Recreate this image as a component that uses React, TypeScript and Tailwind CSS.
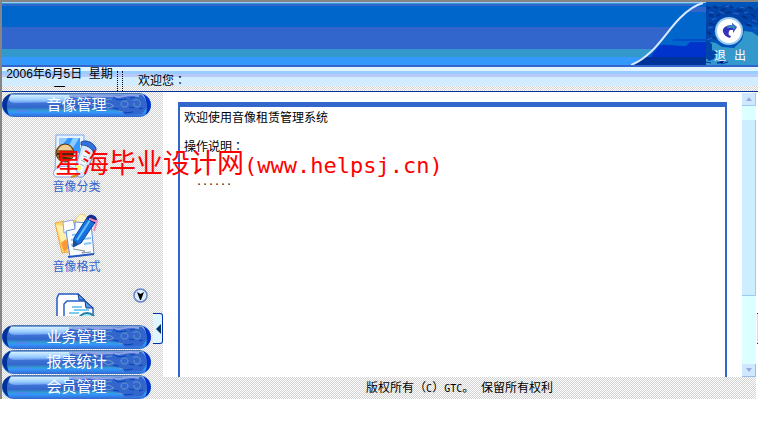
import React from 'react';
import clsx from 'clsx';

const DITHER = 'bg-[conic-gradient(#d2d2d2_25%,#ffffff_0_50%,#d2d2d2_0_75%,#ffffff_0)] bg-[length:2px_2px]';

interface MenuItem {
  label: string;
  icon: React.ReactNode;
}

const CategoryIcon = () => (
  <svg width="46" height="46" viewBox="0 0 46 46" aria-hidden="true">
    <path d="M3 2h28v15l-5 26H2z" fill="#e8f3ff" stroke="#7aa8e8" />
    <path d="M6 5h21v15H6z" fill="#3399ff" />
    <path d="M6 5h9L6 16zM20 5h6l-9 15h-5z" fill="#8fcbff" />
    <path d="M30 8c6-1 14 4 13 9L31 43c-3 3-11 0-10-4z" fill="#d4e9ff" stroke="#6699dd" />
    <path d="M28 9c6-3 15 2 15 8l-2 3C38 14 33 12 28 12z" fill="#3370d8" stroke="#234fae" />
    <path d="M31 17l6 2-8 20-6-2z" fill="#f7fbff" />
    <path d="M30 23l4 1M28 27l4 2M27 31l4 2" stroke="#93acd0" />
    <circle cx="25" cy="35" r="3" fill="#fff27a" />
    <path d="M1 38c5-6 17-7 23 0v6H4c-3 0-4-3-3-6z" fill="#fff" stroke="#8d9ee0" />
    <circle cx="12" cy="20" r="9" fill="#a06a2c" stroke="#593512" />
    <path d="M5 17c3-7 12-7 14 0z" fill="#f0cd94" />
    <path d="M4 21h16M6 24l12 2" stroke="#4b2809" strokeWidth="2" />
    <path d="M18 44l7-2" stroke="#d58a25" strokeWidth="2" />
  </svg>
);

const FormatIcon = () => (
  <svg width="46" height="46" viewBox="0 0 46 46" aria-hidden="true">
    <path d="M2 10l9-2 3 3 9-4 6 30-20 3z" fill="#ffd86b" stroke="#f0a83c" />
    <path d="M3 12l8 25 6-4-5-20z" fill="#ffefad" />
    <path d="M8 30l3 9 5-4-3-9z" fill="#ff9838" />
    <path d="M10 9l10-2 3 11-12 2z" fill="#fff" stroke="#93a7de" />
    <path d="M23 6l4-5 5 1 3 5v8H23z" fill="#fff5c7" stroke="#efcf87" />
    <path d="M13 18l9-2V9l16 1 3 31-24 3z" fill="#f9fcff" stroke="#5c8ee0" />
    <path d="M15 44l26-3" stroke="#2458c0" strokeWidth="2" />
    <path d="M19 22l9-1M18 27l8-1M18 32l5-1M31 31l7-1M30 26l8-1" stroke="#86c5f6" strokeWidth="2" />
    <path d="M20 36l12 2-3 2 9-1" stroke="#888e9c" fill="none" />
    <path d="M35 3l8 5-15 22-8 4 1-9z" fill="#1673dd" stroke="#143fa0" />
    <path d="M37 7L24 27" stroke="#65c1ff" strokeWidth="2" />
    <path d="M35 3c3-3 9 0 9 4l-2 4-8-5z" fill="#142c8f" />
    <path d="M36 6c3 0 6 3 8 2l-3 10" fill="none" stroke="#ef8bbb" strokeWidth="2" />
    <path d="M21 27l-1 7 5-3z" fill="#204d8f" />
  </svg>
);

const DocumentsIcon = () => (
  <svg width="46" height="46" viewBox="0 0 46 46" aria-hidden="true">
    <path d="M3 32V5l2-4h19l6 6v25z" fill="#fff" stroke="#245bc0" strokeWidth="1.5" />
    <path d="M10 42V11l3-3h18l8 7v27z" fill="#fff" stroke="#2962c8" strokeWidth="1.5" />
    <path d="M24 1l1 6h6zM31 8l1 7h7z" fill="#5e9aea" stroke="#123d9c" />
    <path d="M18 14h10M20 17h15M15 20h10" stroke="#7ecbef" strokeWidth="2" />
    <circle cx="33" cy="29" r="9" fill="#b6eaf6" stroke="#227ca8" strokeWidth="2" />
  </svg>
);

const menuItems: MenuItem[] = [
  { label: '音像分类', icon: <CategoryIcon /> },
  { label: '音像格式', icon: <FormatIcon /> },
  { label: '', icon: <DocumentsIcon /> },
];

const PillArt = () => (
  <svg className="absolute inset-0 h-full w-full" viewBox="0 0 149 25" preserveAspectRatio="none" aria-hidden="true">
    <defs>
      <linearGradient id="pill" x2="0" y2="1">
        <stop offset="0" stopColor="#3366aa" />
        <stop offset=".1" stopColor="#99bbee" />
        <stop offset=".35" stopColor="#4477d8" />
        <stop offset=".6" stopColor="#3366cc" />
        <stop offset=".72" stopColor="#3399cc" />
        <stop offset=".8" stopColor="#3399ff" />
        <stop offset="1" stopColor="#3366cc" />
      </linearGradient>
      <linearGradient id="shine" x2="0" y2="1">
        <stop offset="0" stopColor="#d5f0ff" />
        <stop offset=".6" stopColor="#99ccff" />
        <stop offset="1" stopColor="#6699ee" />
      </linearGradient>
    </defs>
    <rect y="1" width="149" height="24" rx="12" fill="url(#pill)" />
    <path d="M8 2C-2 6-2 18 7 23 4 17 4 8 9 3z" fill="#003399" />
    <path d="M141 2c10 4 10 17 2 21 3-5 3-14-2-21z" fill="#0033cc" />
    <path d="M9 3h58v7l-54 1C7 11 5 7 9 3z" fill="url(#shine)" />
    <path d="M62 8l7-3 10 1 9-2 52-1c6 6 5 14 0 19l-16 1-6-4-11-2-10 1-9-3-11 1-15-3z" fill="#3366cc" />
    <path d="M70 4l6 1 9-2 10 2 12-1 10 1 11-2 9 1" fill="none" stroke="#8ea2e6" strokeWidth="2" />
    <path d="M72 8l7-1M86 9l8-2 5 2M104 8l6-1M101 13l6-2 5 3-6 2zM119 12c0-4 7-4 7 0s-7 4-7 0M131 9c4-3 9 0 7 4s-7 1-6-2M116 19l5 1M89 13l5 1" fill="none" stroke="#6699cc" />
    <path d="M80 6l8 2M97 7l6 3M111 5l5 3 8-1M128 6l5-1M111 16l6 1M127 15l5 1M94 11l7 1M78 11l7-1M137 17l4-1M122 21l9-1" fill="none" stroke="#0044bb" />
    <path d="M14 19h14" stroke="#6677ff" />
  </svg>
);

const PillButton = ({ label }: { label: string }) => (
  <button type="button" className="relative block h-[25px] w-[149px] cursor-pointer text-center text-[15px] leading-[22px] text-white">
    <PillArt />
    <span className="relative">{label}</span>
  </button>
);

const Header = () => (
  <header className="relative flex h-[67px] justify-end border-t-2 border-[#858585] bg-[linear-gradient(#99ccff_0_1px,#3399cc_1px_2px,#3366cc_2px_4px,#0066cc_4px_25px,#3366cc_25px_47px,#3399cc_47px_55px,#3399ff_55px_63px,#3366cc_63px)]">
    <svg width="75" height="63" viewBox="0 0 75 63" aria-hidden="true">
      <path d="M0 63C23 54 34 31 49 16 57 8 64 3 72 1h3v62z" fill="#0066cc" />
      <path d="M56 10l5-5h14v5z" fill="#3366cc" />
      <path d="M43 38h32v25H12l17-20 14 1z" fill="#0033cc" />
      <path d="M35 44h20l4-4h16v-2H41z" fill="#0066cc" />
      <path d="M12 55h63v8H1z" fill="#003399" />
      <path d="M42 38h33M32 43l25 2M27 48h48" stroke="#0033cc" />
      <path d="M0 63C23 54 34 31 49 16 57 8 64 3 72 1" fill="none" stroke="#d7eaff" strokeWidth="2" />
    </svg>
    <button type="button" className="relative h-[63px] w-[52px] cursor-pointer text-[12px] text-white">
      <svg className="absolute inset-0" width="52" height="63" viewBox="0 0 52 63" aria-hidden="true">
        <rect width="52" height="63" fill="#0055bb" />
        <path d="M0 3l10 3 9-3 9 4 10-3 8 4 6-2v18l-9-4-7 3-7-6-8-2-10 5-4 16-7 6z" fill="#0044aa" />
        <path d="M1 6h3M7 4l5 2M15 8l5-1M24 4l3 2M31 8l6 1M42 5l5 2M3 13l4 1M11 14l3-2M36 14l5 2M45 12l4 3M3 21l5 2M39 22l7 2M1 30l4 2M7 35l3 2M20 11l5-1" stroke="#003388" strokeWidth="2" />
        <path d="M3 10l5 1M13 9l5 3M27 11l6 1M38 11l4-1M46 18l5 2M6 18l4-2M2 26l5-1M34 5l5 1M19 5l4-1M8 29l2 2M47 26l4 1M1 38l5-2" stroke="#3366cc" />
        <path d="M0 46l5-6 5 1 6 4 12 1 8-8 2-9 8 1 6 4v29H0z" fill="#3399cc" />
        <path d="M0 38l6 4v6l5 2-3 7-5 2-3-3z" fill="#0044aa" />
        <path d="M11 61l8-3-3 3zM15 62l7-2M0 60l5 1M1 50l4 3" stroke="#0033aa" />
        <circle cx="23" cy="29" r="14" fill="#99ccee" />
        <circle cx="23" cy="29" r="12" fill="#fff" />
        <path d="M25 34c-3 0-3-4-1-6h3v3l4-6-5-4v2c-6 0-10 3-9 7 1 3 3 5 7 6z" fill="#3333bb" />
        <path d="M26 21l4 4-3 4v-3h-5l-2-1 6-2z" fill="#3388bb" />
      </svg>
      <span className="absolute inset-x-0 top-[46px] flex justify-center gap-2 pr-1 leading-4">
        <span>退</span>
        <span>出</span>
      </span>
    </button>
  </header>
);

// full-width colon, centred in its cell
const Colon = () => <span className="font-['Noto_Sans_CJK_TC',sans-serif]" lang="zh-TW">：</span>;

const InfoBar = () => (
  <div className={clsx('flex h-[25px] overflow-hidden border-b border-[#003399]', DITHER)}>
    <div className="flex min-w-0 flex-1 bg-[linear-gradient(#e0f4ff_0_4px,#99ccff_4px_7px,#b8c8f8_7px_10px,#d2edff_10px_19px,transparent_19px)]">
      <div className="w-[115px] text-center text-[12px] leading-[14px]">2006年6月5日&nbsp; 星期一</div>
      <div className="mt-1 w-[6px] border-x border-dotted border-black" />
      <div className="pl-[15px] text-[12px] leading-[26px]">欢迎您<Colon /></div>
    </div>
  </div>
);

const Sidebar = () => (
  <aside className={clsx('flex w-[161px] shrink-0', DITHER)}>
    <div className="w-[149px]">
      <PillButton label="音像管理" />
      <div className="relative h-[199px] overflow-hidden pt-4">
        <nav className="flex flex-col items-center gap-[18px]">
          {menuItems.map((item, index) => (
            <a key={index} href="#" aria-label={item.label || '音像'} className="flex flex-col items-center text-[12px] leading-4 text-[#3366cc]">
              {item.icon}
              <span>{item.label}</span>
            </a>
          ))}
        </nav>
        <button type="button" aria-label="向下" className="absolute right-[3px] bottom-[13px] cursor-pointer">
          <svg width="15" height="15" viewBox="0 0 15 15">
            <circle cx="7.5" cy="7.5" r="6.5" fill="#d9efff" stroke="#6984c8" strokeWidth="1.5" />
            <path d="M4 4l3.500 2L11 4 8 12H7z" fill="#000" />
          </svg>
        </button>
      </div>
      <div className="pt-2">
        <PillButton label="业务管理" />
        <PillButton label="报表统计" />
        <PillButton label="会员管理" />
      </div>
    </div>
    <div className="ml-[2px] flex w-[10px] flex-col pt-[221px]">
      <button type="button" aria-label="收起" className="flex h-[31px] items-center justify-end rounded-r-[3px] border border-l-0 border-[#0033aa] bg-[#dff6ff]">
        <svg width="7" height="10" viewBox="0 0 7 10">
          <path d="M6 0v10L1 5z" fill="#003366" />
        </svg>
      </button>
    </div>
  </aside>
);

const ScrollBar = () => (
  <div className="flex w-[14px] shrink-0 flex-col pt-px">
    <button type="button" aria-label="向上滚动" className="flex h-[13px] items-center justify-center border-r border-b border-[#99ccee] bg-[#d0e8ff]">
      <svg width="6" height="4" viewBox="0 0 6 4"><path d="M0 4l3-4 3 4z" fill="#99aadd" /></svg>
    </button>
    <div className="h-[14px] bg-[#dcffff]" />
    <div className="h-[176px] border-r border-b border-[#99ccee] bg-[#cceeff]" />
    <div className="flex-1 bg-[#dcffff]" />
    <button type="button" aria-label="向下滚动" className="flex h-[13px] items-center justify-center border-r border-b border-[#99bbee] bg-[#d0e8ff]">
      <svg width="6" height="4" viewBox="0 0 6 4"><path d="M0 0h6L3 4z" fill="#99aadd" /></svg>
    </button>
  </div>
);

const App: React.FC = () => {
  return (
    <div className="relative min-h-screen bg-white font-['Liberation_Sans','Noto_Sans_CJK_SC',sans-serif] text-black">
      <div className="border-l-2 border-[#858585]">
        <Header />
        <InfoBar />
        <div className="flex">
          <Sidebar />
          <div className="flex min-w-0 flex-1">
            <div className="flex min-w-0 flex-1 flex-col">
              <div className="flex flex-1">
                <main className="mt-[10px] mr-[15px] ml-[15px] min-w-0 flex-1 border-x-2 border-t-[5px] border-[#3366cc] px-1 pt-[3px] text-[12px] leading-4">
                  <p>欢迎使用音像租赁管理系统</p>
                  <p className="mt-3">操作说明<Colon /></p>
                  <p className="mt-5 pl-3 font-['Liberation_Mono',monospace] text-[10px]">......</p>
                </main>
                <ScrollBar />
              </div>
              <footer className={clsx('h-[22px] text-center text-[12px] leading-[22px]', DITHER)}>
                版权所有（<span className="font-['DejaVu_Sans_Mono',monospace] text-[10px]">C</span>）
                <span className="font-['DejaVu_Sans_Mono',monospace] text-[10px]">GTC</span>。&nbsp; 保留所有权利
              </footer>
            </div>
            <div className="flex w-[2px] flex-col items-end pt-[221px]">
              <div className="h-[31px] w-px border-y border-[#003399] bg-[#ccddff]" />
            </div>
          </div>
        </div>
      </div>
      <div className="pointer-events-none absolute top-[148px] left-[55px] text-[27px] leading-8 whitespace-nowrap text-[#ff0000]">
        星海毕业设计网<span className="font-['DejaVu_Sans_Mono',monospace] text-[22px]">(www.helpsj.cn)</span>
      </div>
    </div>
  );
};

export default App;
